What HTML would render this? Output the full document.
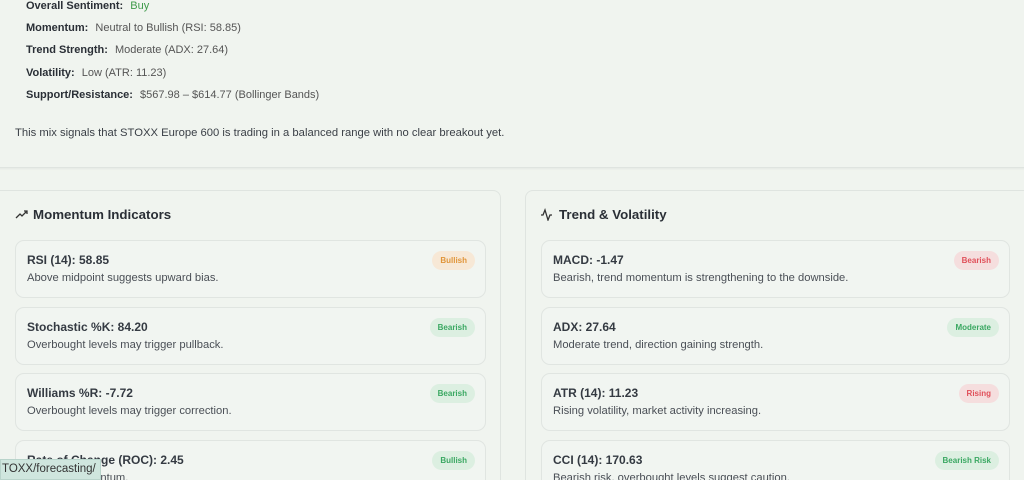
<!DOCTYPE html>
<html><head><style>
*{box-sizing:border-box;margin:0;padding:0}
html{width:1024px;height:480px;overflow:hidden}
body{width:1024px;height:480px;overflow:hidden;background:#f0f4ef;font-family:"Liberation Sans",sans-serif;color:#333;position:relative}
.top{position:absolute;left:-10px;top:-10px;width:1044px;height:178px;border:1px solid #dfe4e0;border-radius:8px;background:#f0f4ef;box-shadow:0 1px 2px rgba(0,0,0,.05)}
.row{position:absolute;left:26px;font-size:11px;color:#555}
.row b{color:#2a2f36;margin-right:4px}
.panel{position:absolute;top:190px;height:290px;border:1px solid #dfe4e0;border-bottom:none;border-radius:8px 8px 0 0;background:#f0f4ef}
.ph{position:absolute;font-size:13.3px;font-weight:bold;color:#2a2f36}
.card{position:absolute;height:58px;border:1px solid #e0e5e1;border-radius:9px;background:#f1f5f1}
.card.last{height:40px;border-bottom:none;border-radius:9px 9px 0 0}
.card .t{position:absolute;left:11px;top:12px;font-size:12px;font-weight:bold;color:#343a42}
.card .d{position:absolute;left:11px;top:31px;font-size:11.2px;color:#4a4f56}
.bd{position:absolute;right:10px;top:10px;height:19px;line-height:19px;padding:0 8px;border-radius:10px;font-size:8px;font-weight:bold}
.g{background:#dcefe1;color:#3aa862}.r{background:#f5dede;color:#e0505a}.o{background:#f7e8d6;color:#e0953a}
.tip{position:absolute;left:0;top:459px;width:101px;height:21px;background:#cfe6de;border:1px solid #b9d4cb;font-size:11.5px;line-height:19px;color:#333;padding-left:1px;overflow:hidden;white-space:nowrap}
</style></head><body>
<div class="top"></div>
<div class="row" style="top:0">
<b>Overall Sentiment:</b> <span style="color:#3f9a4a">Buy</span></div>
<div class="row" style="top:22px"><b>Momentum:</b> Neutral to Bullish (RSI: 58.85)</div>
<div class="row" style="top:44px"><b>Trend Strength:</b> Moderate (ADX: 27.64)</div>
<div class="row" style="top:67px"><b>Volatility:</b> Low (ATR: 11.23)</div>
<div class="row" style="top:89px"><b>Support/Resistance:</b> $567.98 – $614.77 (Bollinger Bands)</div>
<div class="row" style="top:127px;left:15px;color:#3a3f46;font-size:11.25px">This mix signals that STOXX Europe 600 is trading in a balanced range with no clear breakout yet.</div>

<div class="panel" style="left:-8px;width:509px"></div>
<div class="panel" style="left:525px;width:499px;border-right:none;border-radius:8px 0 0 0"></div>

<svg style="position:absolute;left:15px;top:210px" width="13" height="10" viewBox="0 0 13 10"><path d="M1 8 L5 4 L7 6 L12 1 M9 1 H12 V4" fill="none" stroke="#333" stroke-width="1.3"/></svg>
<div class="ph" style="left:33px;top:207px">Momentum Indicators</div>
<svg style="position:absolute;left:540px;top:208px" width="13" height="13" viewBox="0 0 13 13"><path d="M1 7 H3 L5 2 L8 12 L10 7 H12" fill="none" stroke="#333" stroke-width="1.3"/></svg>
<div class="ph" style="left:559px;top:207px">Trend &amp; Volatility</div>

<div class="card" style="left:15px;top:240px;width:471px"><div class="t">RSI (14): 58.85</div><div class="d">Above midpoint suggests upward bias.</div><div class="bd o">Bullish</div></div>
<div class="card" style="left:15px;top:307px;width:471px"><div class="t">Stochastic %K: 84.20</div><div class="d">Overbought levels may trigger pullback.</div><div class="bd g">Bearish</div></div>
<div class="card" style="left:15px;top:373px;width:471px"><div class="t">Williams %R: -7.72</div><div class="d">Overbought levels may trigger correction.</div><div class="bd g">Bearish</div></div>
<div class="card last" style="left:15px;top:440px;width:471px;overflow:hidden"><div class="t">Rate of Change (ROC): 2.45</div><div class="d">Positive momentum.</div><div class="bd g">Bullish</div></div>

<div class="card" style="left:541px;top:240px;width:469px"><div class="t">MACD: -1.47</div><div class="d">Bearish, trend momentum is strengthening to the downside.</div><div class="bd r">Bearish</div></div>
<div class="card" style="left:541px;top:307px;width:469px"><div class="t">ADX: 27.64</div><div class="d">Moderate trend, direction gaining strength.</div><div class="bd g">Moderate</div></div>
<div class="card" style="left:541px;top:373px;width:469px"><div class="t">ATR (14): 11.23</div><div class="d">Rising volatility, market activity increasing.</div><div class="bd r">Rising</div></div>
<div class="card last" style="left:541px;top:440px;width:469px;overflow:hidden"><div class="t">CCI (14): 170.63</div><div class="d">Bearish risk, overbought levels suggest caution.</div><div class="bd g">Bearish Risk</div></div>

<div class="tip">TOXX/forecasting/</div>
</body></html>
